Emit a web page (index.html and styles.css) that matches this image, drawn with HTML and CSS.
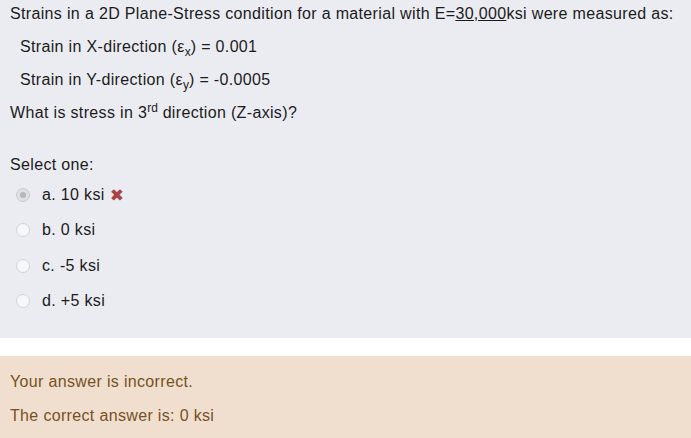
FILE: index.html
```html
<!DOCTYPE html>
<html>
<head>
<meta charset="utf-8">
<link rel="stylesheet" href="styles.css">
</head>
<body>
<div class="formulation">
  <p>Strains in a 2D Plane-Stress condition for a material with E=<u>30,000</u>ksi were measured as:</p>
  <p class="indent">Strain in X-direction (ε<sub>x</sub>) = 0.001</p>
  <p class="indent">Strain in Y-direction (ε<sub>y</sub>) = -0.0005</p>
  <p>What is stress in 3<sup>rd</sup> direction (Z-axis)?</p>
  <div class="prompt">Select one:</div>
  <div class="answers">
    <div class="option"><span class="radio checked"></span><span class="label">a. 10 ksi</span><span class="wrong">&#x2716;</span></div>
    <div class="option"><span class="radio"></span><span class="label">b. 0 ksi</span></div>
    <div class="option"><span class="radio"></span><span class="label">c. -5 ksi</span></div>
    <div class="option"><span class="radio"></span><span class="label">d. +5 ksi</span></div>
  </div>
</div>
<div class="outcome">
  <p>Your answer is incorrect.</p>
  <p>The correct answer is: 0 ksi</p>
</div>
</body>
</html>
```
FILE: styles.css
```css
html, body {
  margin: 0;
  padding: 0;
  background: #ffffff;
}
body {
  font-family: "Liberation Sans", Arial, sans-serif;
  font-size: 16px;
  letter-spacing: 0.34px;
  line-height: 22px;
  color: #1b1b1b;
}
p {
  margin: 0 0 11.3px;
}
.formulation {
  background: #ebecf2;
  padding: 2.5px 10px 0 10px;
  height: 338px;
  box-sizing: border-box;
}
.indent {
  padding-left: 10px;
}
sub, sup {
  line-height: 0;
  font-size: 12px;
  letter-spacing: 0;
}
.prompt {
  margin-top: 30px;
}
.answers {
  margin-top: 7.8px;
  display: flex;
  flex-direction: column;
  gap: 13.2px;
}
.option {
  display: flex;
  align-items: center;
  height: 22px;
  padding-left: 6px;
}
.radio {
  width: 12px;
  height: 12px;
  border: 1px solid #d3d4d8;
  border-radius: 50%;
  background: #f7f7f9;
  margin-right: 12px;
  position: relative;
  box-sizing: content-box;
}
.radio.checked {
  background: #e0e0e3;
  border-color: #c9cacd;
}
.radio.checked::after {
  content: "";
  position: absolute;
  left: 3px;
  top: 3px;
  width: 6px;
  height: 6px;
  border-radius: 50%;
  background: #b5b6b9;
}
.wrong {
  color: #a94442;
  font-family: "DejaVu Sans", sans-serif;
  font-size: 17px;
  margin-left: 5px;
  letter-spacing: 0;
}
.outcome {
  margin-top: 18px;
  background: #f0decf;
  color: #76521f;
  padding: 15px 10px 12px 10px;
}
.outcome p {
  margin-bottom: 12px;
}
.outcome p:last-child {
  margin-bottom: 0;
}
```
